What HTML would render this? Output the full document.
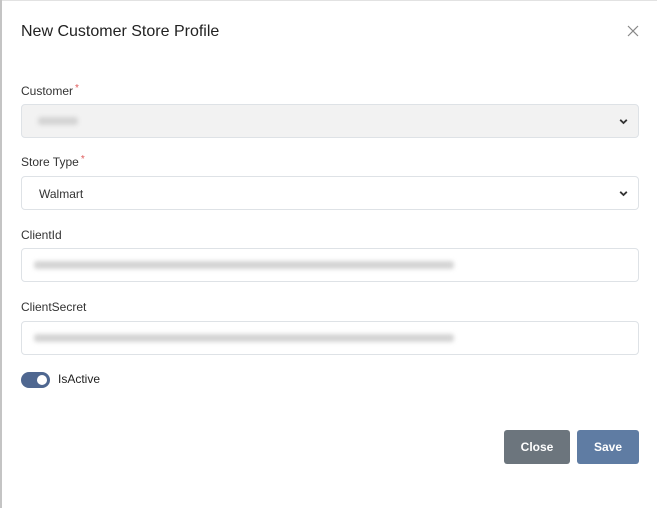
<!DOCTYPE html>
<html><head><style>
*{box-sizing:border-box;margin:0;padding:0}
body{width:657px;height:508px;background:#fff;font-family:"Liberation Sans",Arial,sans-serif;position:relative;overflow:hidden;color:#212529}
.lstrip{position:absolute;left:0;top:0;width:2px;height:508px;background:#c4c4c4}
.top{position:absolute;left:0;top:0;width:657px;height:1px;background:#e2e2e2}
.title{position:absolute;left:21px;top:23px;font-size:16px;color:#222}
.x{position:absolute;left:627px;top:25px}
.lbl{position:absolute;left:21px;font-size:12px;color:#333}
.lbl b{color:#e05a5a;font-weight:normal;font-size:10px;position:relative;top:-4px;margin-left:2px}
.fld{position:absolute;left:21px;width:618px;height:34px;border:1px solid #dee2e6;border-radius:4px;background:#fff}
.fld.dis{background:#f2f2f2}
.fld .t{position:absolute;left:17px;top:10px;font-size:12px;color:#333}
.blur{position:absolute;left:12px;top:12px;height:8px;background:#d4d4d4;filter:blur(2px);border-radius:3px}
.chev{position:absolute;right:10px;top:13px}
.tog{position:absolute;left:21px;top:372px;width:29px;height:16px;border-radius:8px;background:#4f6790}
.tog:after{content:"";position:absolute;right:3px;top:3px;width:10px;height:10px;border-radius:5px;background:#fff}
.btn{position:absolute;top:430px;height:34px;border-radius:3px;color:#fff;font-size:12px;font-weight:bold;text-align:center;line-height:34px}
</style></head><body>
<div class="top"></div><div class="lstrip"></div>
<div class="title">New Customer Store Profile</div>
<svg class="x" width="12" height="12" viewBox="0 0 12 12"><path d="M1 1L11 11M11 1L1 11" stroke="#888" stroke-width="1.2"/></svg>
<div class="lbl" style="top:84px">Customer<b>*</b></div>
<div class="fld dis" style="top:104px"><div class="blur" style="width:40px;left:16px"></div>
<svg class="chev" width="9" height="7" viewBox="0 0 9 7"><path d="M1.2 1.8L4.5 5L7.8 1.8" stroke="#333" stroke-width="1.8" fill="none"/></svg></div>
<div class="lbl" style="top:155px">Store Type<b>*</b></div>
<div class="fld" style="top:176px"><div class="t">Walmart</div>
<svg class="chev" width="9" height="7" viewBox="0 0 9 7"><path d="M1.2 1.8L4.5 5L7.8 1.8" stroke="#333" stroke-width="1.8" fill="none"/></svg></div>
<div class="lbl" style="top:228px">ClientId</div>
<div class="fld" style="top:248px"><div class="blur" style="width:420px"></div></div>
<div class="lbl" style="top:300px">ClientSecret</div>
<div class="fld" style="top:321px"><div class="blur" style="width:420px"></div></div>
<div class="tog"></div>
<div class="lbl" style="top:372px;left:58px;color:#222">IsActive</div>
<div class="btn" style="left:504px;width:66px;background:#6c757d">Close</div>
<div class="btn" style="left:577px;width:62px;background:#5f7ca3">Save</div>
</body></html>
